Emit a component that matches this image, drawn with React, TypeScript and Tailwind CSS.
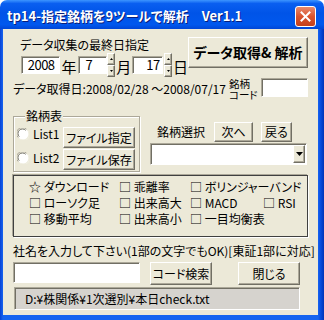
import React from "react";

const raised =
  "bg-[#ece9d8] border border-t-white border-l-white border-r-[#716f64] border-b-[#716f64] shadow-[inset_-1px_-1px_0_#aca899]";
const sunken =
  "bg-white border border-t-[#aca899] border-l-[#aca899] border-r-white border-b-white shadow-[inset_1px_1px_0_#716f64]";

function Spinner() {
  return (
    <div className="flex flex-col w-[8px] h-[24px]">
      <div className={`${raised} flex-1 flex items-center justify-center`}>
        <svg width="3" height="2" viewBox="0 0 3 2">
          <polygon points="1.5,0 3,2 0,2" fill="#000" />
        </svg>
      </div>
      <div className={`${raised} flex-1 flex items-center justify-center`}>
        <svg width="3" height="2" viewBox="0 0 3 2">
          <polygon points="0,0 3,0 1.5,2" fill="#000" />
        </svg>
      </div>
    </div>
  );
}

function Radio() {
  return (
    <svg width="12" height="12" viewBox="0 0 12 12" className="shrink-0">
      <circle cx="6" cy="6" r="5.5" fill="#ffffff" />
      <path d="M1.2 9.5 A5.3 5.3 0 0 1 9.5 1.2" stroke="#aca899" strokeWidth="1" fill="none" />
      <path d="M2.3 8.7 A4.2 4.2 0 0 1 8.7 2.3" stroke="#716f64" strokeWidth="1" fill="none" />
      <path d="M10.8 2.5 A5.3 5.3 0 0 1 2.5 10.8" stroke="#f1efe2" strokeWidth="1" fill="none" />
    </svg>
  );
}

function Btn({ children, className }: { children: React.ReactNode; className: string }) {
  return (
    <div className={`${raised} flex items-center justify-center whitespace-nowrap ${className}`}>
      {children}
    </div>
  );
}

export default function App() {
  return (
    <div className="w-[324px] h-[320px] bg-white">
      <div className="w-[324px] h-[320px] flex flex-col rounded-t-[7px] overflow-hidden font-['Noto_Sans_CJK_JP',sans-serif] [font-feature-settings:'palt'] text-black">
        {/* Title bar */}
        <div className="h-[29px] shrink-0 flex items-center pt-[3px] pl-[7px] pr-[8px] bg-[linear-gradient(180deg,#3d95ff_0%,#0a5ff0_12%,#0054e8_45%,#0058ee_85%,#0046d6_100%)]">
          <div className="text-white font-bold text-[13px] leading-[16px] whitespace-nowrap [text-shadow:1px_1px_0_#0a1e7a]">
            tp14-指定銘柄を9ツールで解析　Ver1.1
          </div>
          <div className="ml-auto w-[21px] h-[21px] rounded-[3px] border border-white bg-[linear-gradient(180deg,#e88a6c_0%,#d9532e_50%,#c4401c_100%)] flex items-center justify-center">
            <svg width="11" height="11" viewBox="0 0 11 11">
              <path d="M1.5 1.5 L9.5 9.5 M9.5 1.5 L1.5 9.5" stroke="#ffffff" strokeWidth="2" strokeLinecap="square" />
            </svg>
          </div>
        </div>

        {/* Frame */}
        <div className="flex-1 pl-[3px] pr-[6px] pb-[5px] bg-[linear-gradient(90deg,#0842d4_0px,#1664f0_3px,#1664f0_calc(100%-6px),#0a50e4_calc(100%-4px),#0033b8_100%)]">
          <div className="h-full bg-[#ece9d8] pl-[10px] pt-[7px] text-[12px] flex flex-col">
            {/* Row 1 */}
            <div className="flex h-[40px] shrink-0">
              <div className="w-[175px] pl-[7px]">
                <div className="h-[17px] leading-[17px] whitespace-nowrap">データ収集の最終日指定</div>
                <div className="flex items-center h-[24px]">
                  <div className={`${sunken} ml-[1px] w-[39px] h-[18px] text-[13px] leading-[15px] text-right pr-[4px] tracking-[-0.5px]`}>2008</div>
                  <div className="ml-[2px] w-[15px] text-[15px] leading-[18px] mt-[3px]">年</div>
                  <div className={`${sunken} ml-[1px] w-[30px] h-[18px] text-[13px] leading-[15px] pl-[7px]`}>7</div>
                  <Spinner />
                  <div className="ml-[1px] w-[15px] text-[15px] leading-[18px] mt-[3px]">月</div>
                  <div className={`${sunken} ml-[1px] w-[31px] h-[18px] text-[13px] leading-[15px] pl-[13px] tracking-[-0.5px]`}>17</div>
                  <div className="ml-[1px]">
                    <Spinner />
                  </div>
                  <div className="ml-[1px] w-[15px] text-[15px] leading-[18px] mt-[3px]">日</div>
                </div>
              </div>
              <Btn className="w-[120px] h-[31px] mt-[1px] font-bold text-[14px]">データ取得&amp; 解析</Btn>
            </div>

            {/* Row 2 */}
            <div className="flex items-center h-[22px] mt-[2px] shrink-0">
              <div className="w-[216px] whitespace-nowrap leading-[16px]">データ取得日:2008/02/28 ～2008/07/17</div>
              <div className="w-[32px] text-[10.5px] leading-[11px] whitespace-nowrap">
                銘柄
                <br />
                コード
              </div>
              <div className={`${sunken} w-[47px] h-[19px] self-start`} />
            </div>

            {/* Row 3 */}
            <div className="flex items-start mt-[10px] shrink-0">
              <div className="relative w-[127px] h-[56px] mt-[6px] border border-[#aca899] shadow-[inset_1px_1px_0_#ffffff,1px_1px_0_#ffffff]">
                <div className="absolute left-[11px] top-[-8px] px-[1px] bg-[#ece9d8] leading-[14px]">銘柄表</div>
                <div className="flex pl-[3px] pt-[10px]">
                  <div className="flex flex-col gap-[12px] mt-[1px]">
                    <div className="flex items-center h-[12px]">
                      <Radio />
                      <span className="ml-[4px] w-[26px] leading-[12px]">List1</span>
                    </div>
                    <div className="flex items-center h-[12px]">
                      <Radio />
                      <span className="ml-[4px] w-[26px] leading-[12px]">List2</span>
                    </div>
                  </div>
                  <div className="flex flex-col gap-[1px] ml-[4px]">
                    <Btn className="w-[72px] h-[21px]">ファイル指定</Btn>
                    <Btn className="w-[72px] h-[21px]">ファイル保存</Btn>
                  </div>
                </div>
              </div>

              <div className="ml-[10px] mt-[12px] w-[157px]">
                <div className="flex items-center h-[20px]">
                  <div className="ml-[7px] w-[57px] whitespace-nowrap">銘柄選択</div>
                  <Btn className="w-[39px] h-[20px]">次へ</Btn>
                  <Btn className="w-[31px] h-[20px] ml-[8px]">戻る</Btn>
                </div>
                <div className={`${sunken} mt-[1px] h-[22px] w-[157px] flex items-center justify-end pr-[1px]`}>
                  <div className={`${raised} w-[12px] h-[18px] flex items-center justify-center`}>
                    <svg width="7" height="4" viewBox="0 0 7 4">
                      <polygon points="0,0 7,0 3.5,4" fill="#000" />
                    </svg>
                  </div>
                </div>
              </div>
            </div>

            {/* Row 4: checkbox panel */}
            <div className="mt-[3px] w-[295px] h-[62px] shrink-0 border border-[#404040] shadow-[-1px_-1px_0_#aca899,1px_1px_0_#ffffff]">
              <div className="grid grid-cols-[90px_71px_73px_auto] auto-rows-[16px] pt-[3px] pl-[15px] leading-[16px] whitespace-nowrap">
                <div>☆ ダウンロード</div>
                <div>□ 乖離率</div>
                <div className="col-span-2">□ ボリンジャーバンド</div>
                <div>□ ローソク足</div>
                <div>□ 出来高大</div>
                <div>□ MACD</div>
                <div>□ RSI</div>
                <div>□ 移動平均</div>
                <div>□ 出来高小</div>
                <div>□ 一目均衡表</div>
              </div>
            </div>

            {/* Row 5 */}
            <div className="mt-[6px] h-[16px] leading-[16px] whitespace-nowrap shrink-0">
              社名を入力して下さい(1部の文字でもOK)[東証1部に対応]
            </div>

            {/* Row 6 */}
            <div className="flex items-start mt-[3px] shrink-0">
              <div className={`${sunken} w-[127px] h-[21px]`} />
              <Btn className="ml-[10px] w-[62px] h-[23px]">コード検索</Btn>
              <Btn className="ml-[26px] w-[62px] h-[23px]">閉じる</Btn>
            </div>

            {/* Row 7 status */}
            <div className="mt-[2px] ml-[1px] w-[286px] h-[23px] shrink-0 bg-[#d6d3ce] border border-t-[#aca899] border-l-[#aca899] border-r-white border-b-white shadow-[inset_1px_1px_0_#716f64] flex items-center pl-[10px] whitespace-nowrap">
              D:¥株関係¥1次選別¥本日check.txt
            </div>
          </div>
        </div>
      </div>
    </div>
  );
}
